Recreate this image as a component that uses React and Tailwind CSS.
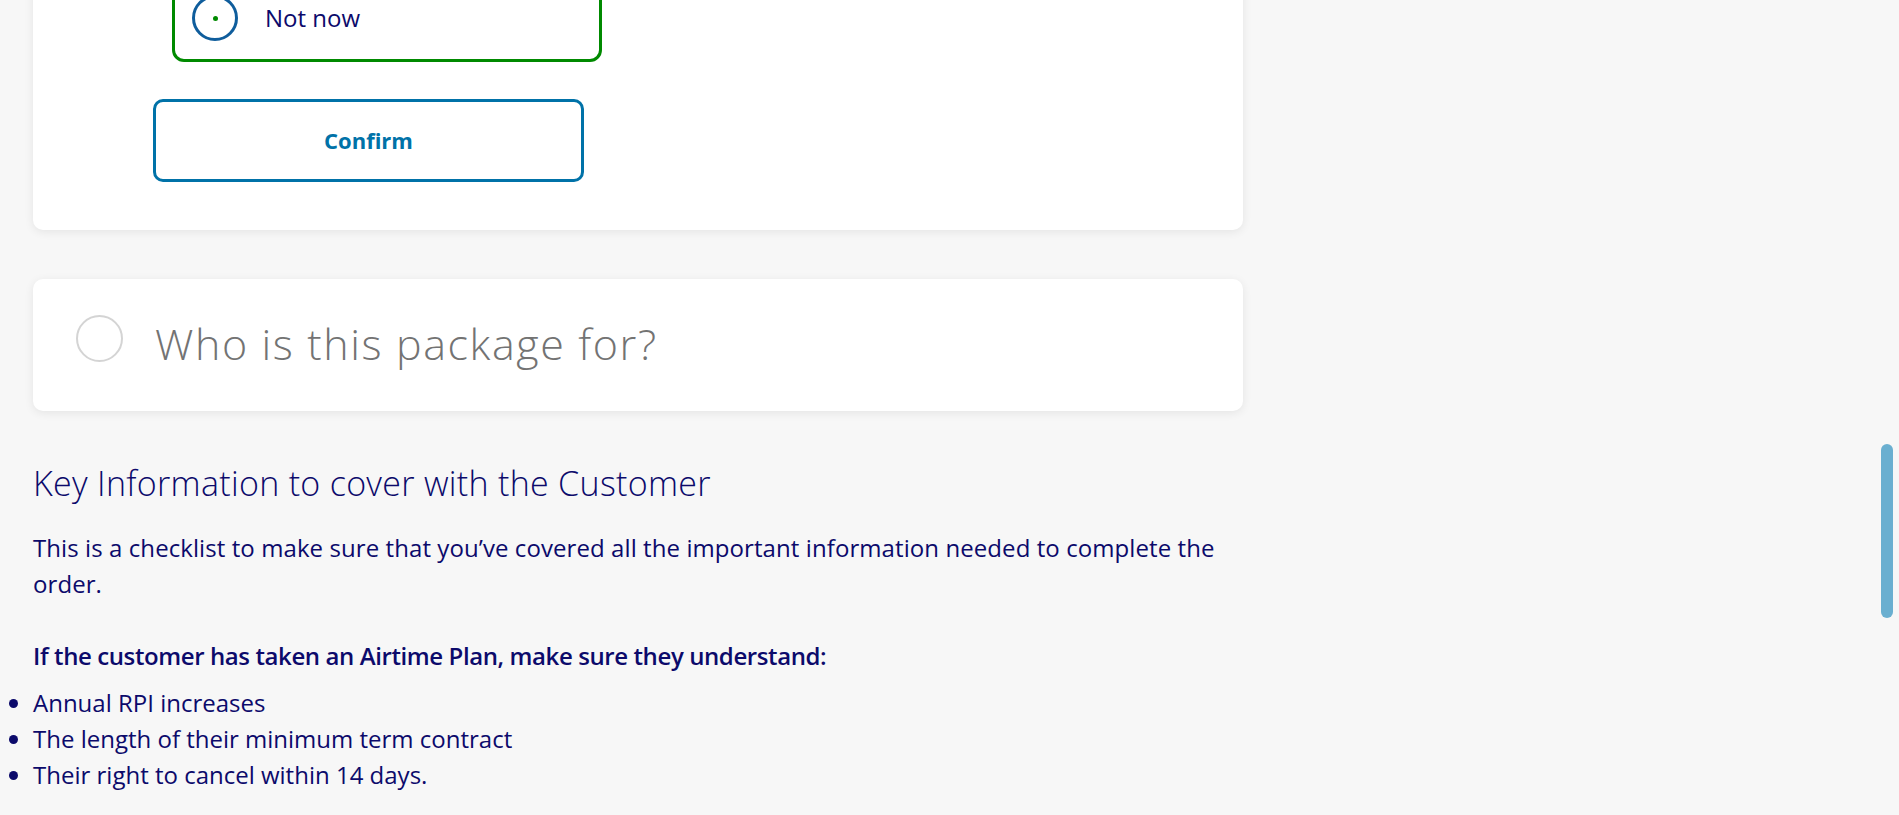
export default function App() {
  return (
    <div
      className="relative h-[815px] w-full overflow-hidden bg-[#f7f7f7] text-[#0c0a6b]"
      style={{ fontFamily: '"Open Sans", "Noto Sans", sans-serif' }}
    >
      <div className="flex flex-col w-[1210px] ml-[33px] -mt-[56px]">
        {/* Card 1 */}
        <div className="rounded-[10px] bg-white shadow-[0_2px_10px_rgba(0,0,0,0.08)] pt-[30px] pb-[48px]">
          <div className="ml-[139px] w-[430px] h-[88px] border-[3px] border-[#008a00] rounded-[12px] flex items-center pl-[17px]">
            <div className="w-[46px] h-[46px] rounded-full border-[3px] border-[#0f5d9c] flex items-center justify-center">
              <div className="w-[5px] h-[5px] rounded-full bg-[#008a00]" />
            </div>
            <span className="ml-[27px] text-[24px] leading-[32px]">Not now</span>
          </div>
          <button className="mt-[37px] ml-[120px] w-[431px] h-[83px] border-[3px] border-[#0072a8] rounded-[10px] bg-white text-[#0072a8] font-bold text-[22px] flex items-center justify-center">
            Confirm
          </button>
        </div>

        {/* Card 2 */}
        <div className="mt-[49px] h-[132px] rounded-[10px] bg-white shadow-[0_2px_10px_rgba(0,0,0,0.08)] flex items-start pt-[36px] pl-[43px]">
          <div className="w-[47px] h-[47px] rounded-full border-2 border-[#d4d4d4] shrink-0" />
          <div className="ml-[32px] mt-[5px] text-[43px] leading-[48px] font-light tracking-[1.6px] text-[#737373]">
            Who is this package for?
          </div>
        </div>

        {/* Key information */}
        <h2 className="mt-[52px] text-[34px] leading-[40px] font-light tracking-[0.3px]">
          Key Information to cover with the Customer
        </h2>
        <p className="mt-[27px] text-[24px] leading-[36px] tracking-[0.08px]">
          This is a checklist to make sure that you’ve covered all the important information needed to complete the order.
        </p>
        <p className="mt-[36px] text-[24px] leading-[36px] font-semibold tracking-[-0.4px]">
          If the customer has taken an Airtime Plan, make sure they understand:
        </p>
        <ul className="mt-[11px] list-disc list-outside text-[24px] leading-[36px]">
          <li>Annual RPI increases</li>
          <li>The length of their minimum term contract</li>
          <li>Their right to cancel within 14 days.</li>
        </ul>
      </div>

      {/* scrollbar thumb */}
      <div className="absolute left-[1881px] top-[444px] w-[12px] h-[174px] rounded-full bg-[#6aafd0]" />
    </div>
  );
}
